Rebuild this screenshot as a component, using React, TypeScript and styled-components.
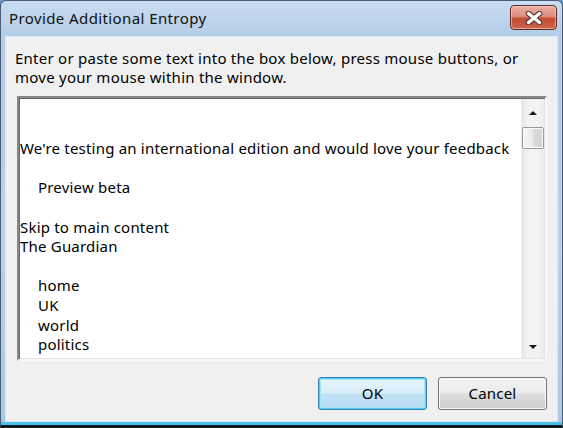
import React from "react";
import styled, { createGlobalStyle } from "styled-components";

const Global = createGlobalStyle`
  html, body { margin: 0; padding: 0; background: #6f9ccf; }
  body { font-family: "Noto Sans", "Open Sans", sans-serif; }
`;

const Window = styled.div`
  width: 563px;
  height: 428px;
  box-sizing: border-box;
  display: flex;
  flex-direction: column;
  border: 1px solid #4a5d74;
  border-bottom: 3px solid #0e1a22;
  border-radius: 6px 6px 0 0;
  padding: 0 4px 3px;
  background: linear-gradient(
    to bottom,
    #c9dcf0 0,
    #b4cde8 34px,
    #b9d1ea 60%,
    #a9c9e6 calc(100% - 3px),
    #45c2e8 calc(100% - 3px)
  );
  overflow: hidden;
`;

const TitleBar = styled.div`
  height: 35px;
  flex: none;
  display: flex;
  align-items: center;
  justify-content: space-between;
  padding: 0 1px 0 4px;
`;

const Title = styled.span`
  font-size: 15px;
  color: #111;
  letter-spacing: 0.4px;
  padding-bottom: 2px;
`;

const CloseButton = styled.div`
  width: 45px;
  height: 23px;
  margin-top: -2px;
  border: 1px solid #5b2a27;
  border-radius: 4px;
  display: flex;
  align-items: center;
  justify-content: center;
  background: linear-gradient(
    to bottom,
    #eab0a3 0,
    #dc8e7c 45%,
    #c24a33 55%,
    #d0674c 100%
  );
  box-shadow: inset 0 0 0 1px rgba(255, 220, 210, 0.55);
`;

const Client = styled.div`
  flex: 1;
  min-height: 0;
  display: flex;
  flex-direction: column;
  background: #f0f0f0;
  border: 1px solid #dbe6f2;
  padding: 12px 10px 11px 10px;
`;

const Description = styled.p`
  margin: 0 0 9px -1px;
  font-size: 15px;
  line-height: 19px;
  color: #000;
  letter-spacing: 0.25px;
`;

const TextBox = styled.div`
  flex: 1;
  min-height: 0;
  display: flex;
  margin-left: 1px;
  background: #fff;
  border-style: solid;
  border-width: 2px;
  border-color: #888 #f8f8f8 #f8f8f8 #888;
  box-shadow: inset 1px 1px 0 #696969, inset -1px -1px 0 #e3e3e3;
`;

const TextArea = styled.div`
  flex: 1;
  padding: 2px 0 0 1px;
  overflow: hidden;
  font-size: 15px;
  line-height: 19.6px;
  color: #000;
  letter-spacing: 0.2px;
`;

const Line = styled.div<{ $indent?: boolean }>`
  height: 19.6px;
  white-space: nowrap;
  padding-left: ${(p) => (p.$indent ? "18px" : "0")};
`;

const ScrollBar = styled.div`
  width: 22px;
  flex: none;
  display: flex;
  flex-direction: column;
  margin: 1px 1px 1px 0;
  background: linear-gradient(to right, #e6e6e6, #f3f3f3 30%, #f3f3f3 70%, #ececec);
  border-left: 1px solid #eaeaea;
`;

const ArrowButton = styled.div<{ $down?: boolean }>`
  height: 27px;
  flex: none;
  display: flex;
  justify-content: center;
  align-items: ${(p) => (p.$down ? "flex-end" : "flex-start")};
  padding: ${(p) => (p.$down ? "0 0 9px 0" : "12px 0 0 0")};
  box-sizing: border-box;
`;

const Triangle = styled.div<{ $down?: boolean }>`
  width: 0;
  height: 0;
  border-left: 4px solid transparent;
  border-right: 4px solid transparent;
  ${(p) =>
    p.$down
      ? "border-top: 4px solid #1a1a1a;"
      : "border-bottom: 4px solid #1a1a1a;"}
`;

const Track = styled.div`
  flex: 1;
  padding-top: 1px;
`;

const Thumb = styled.div`
  height: 20px;
  border: 1px solid #9a9a9a;
  border-radius: 2px;
  background: linear-gradient(to right, #f6f6f6, #ececec 45%, #dadada 55%, #d4d4d4);
  box-shadow: inset 0 0 0 1px #fbfbfb;
`;

const ButtonRow = styled.div`
  display: flex;
  justify-content: flex-end;
  gap: 11px;
  margin-top: 16px;
  flex: none;
`;

const Button = styled.button<{ $default?: boolean }>`
  width: 109px;
  height: 33px;
  font-family: inherit;
  font-size: 15px;
  letter-spacing: 0.2px;
  color: #000;
  border-radius: 3px;
  padding: 0 0 2px;
  border: 1px solid ${(p) => (p.$default ? "#3c7fb1" : "#707070")};
  background: ${(p) =>
    p.$default
      ? "linear-gradient(to bottom, #e6f4fb 0, #d8eefa 48%, #c0e2f5 52%, #b8dcf2 100%)"
      : "linear-gradient(to bottom, #f3f3f3 0, #ebebeb 48%, #dddddd 52%, #cfcfcf 100%)"};
  box-shadow: ${(p) =>
    p.$default
      ? "inset 0 0 0 1px #4cd0f5, inset 0 0 0 2px #a6e4f8"
      : "inset 0 0 0 1px #fcfcfc"};
`;

function CloseGlyph() {
  return (
    <svg width="18" height="14" viewBox="0 0 18 14">
      <path
        d="M3.5 2.5 L14.5 11.5 M14.5 2.5 L3.5 11.5"
        stroke="#5a3530"
        strokeWidth="5.5"
        strokeLinecap="round"
        fill="none"
      />
      <path
        d="M3.5 2.5 L14.5 11.5 M14.5 2.5 L3.5 11.5"
        stroke="#fff"
        strokeWidth="3.5"
        strokeLinecap="round"
        fill="none"
      />
    </svg>
  );
}

const lines: { text: string; indent?: boolean }[] = [
  { text: "" },
  { text: "" },
  { text: "We're testing an international edition and would love your feedback" },
  { text: "" },
  { text: "Preview beta", indent: true },
  { text: "" },
  { text: "Skip to main content" },
  { text: "The Guardian" },
  { text: "" },
  { text: "home", indent: true },
  { text: "UK", indent: true },
  { text: "world", indent: true },
  { text: "politics", indent: true },
];

export default function App() {
  return (
    <>
      <Global />
      <Window>
        <TitleBar>
          <Title>Provide Additional Entropy</Title>
          <CloseButton>
            <CloseGlyph />
          </CloseButton>
        </TitleBar>
        <Client>
          <Description>
            Enter or paste some text into the box below, press mouse buttons, or
            <br />
            move your mouse within the window.
          </Description>
          <TextBox>
            <TextArea>
              {lines.map((l, i) => (
                <Line key={i} $indent={l.indent}>
                  {l.text || "\u00a0"}
                </Line>
              ))}
            </TextArea>
            <ScrollBar>
              <ArrowButton>
                <Triangle />
              </ArrowButton>
              <Track>
                <Thumb />
              </Track>
              <ArrowButton $down>
                <Triangle $down />
              </ArrowButton>
            </ScrollBar>
          </TextBox>
          <ButtonRow>
            <Button $default>OK</Button>
            <Button>Cancel</Button>
          </ButtonRow>
        </Client>
      </Window>
    </>
  );
}
